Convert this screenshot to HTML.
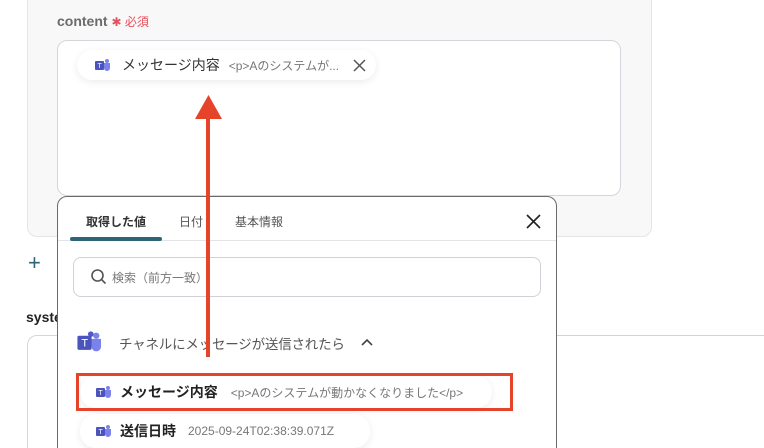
<!DOCTYPE html>
<html><head><meta charset="utf-8"><style>
*{box-sizing:border-box;margin:0;padding:0}
html,body{width:764px;height:448px;overflow:hidden}
body{background:#fff;font-family:"Liberation Sans","Noto Sans CJK JP",sans-serif;position:relative}
.abs{position:absolute}
.panel{left:27px;top:-12px;width:625px;height:249px;background:#f8f8f9;border:1px solid #e3e5e9;border-radius:10px}
.ta{left:57px;top:40px;width:564px;height:156px;background:#fff;border:1px solid #d3d6db;border-radius:10px}
.pill{background:#fff;border-radius:16px;box-shadow:0 2px 8px rgba(0,0,0,.08);display:flex;align-items:center;white-space:nowrap}
.pop{left:57px;top:196px;width:500px;height:270px;background:#fff;border:1px solid #6b6b6b;border-radius:10px}
.t{font-size:13px;color:#333}
.g{color:#777;font-size:12px}
</style></head><body>
<div class="abs panel"></div>
<div class="abs" style="left:57px;top:13px;font-size:14px;font-weight:bold;color:#6b6b6b">content <span style="color:#e8505b;font-weight:normal;font-size:12px">✱ 必須</span></div>
<div class="abs ta"></div>
<div class="abs pill" style="left:77px;top:50px;width:299px;height:30px;padding-left:18px">
<svg width="16" height="14" viewBox="0 0 16 14"><circle cx="12" cy="3" r="2" fill="#7b83eb"/><path d="M8 5h7v5a3 3 0 0 1-6 0z" fill="#7b83eb"/><rect x="0" y="3" width="9" height="9" rx="1" fill="#4b53bc"/><text x="2.5" y="10" font-size="7" fill="#fff" font-family="Liberation Sans">T</text></svg>
<span class="t" style="margin-left:11px;font-size:14px">メッセージ内容</span><span class="g" style="margin-left:9px">&lt;p&gt;Aのシステムが...</span>
<svg style="margin-left:14px" width="13" height="13" viewBox="0 0 13 13"><path d="M1 1l11 11M12 1L1 12" stroke="#555" stroke-width="1.5"/></svg></div>
<div class="abs" style="left:28px;top:250px;font-size:22px;color:#2f6378">+</div>
<div class="abs" style="left:26px;top:309px;font-size:14px;font-weight:bold;color:#222">system</div>
<div class="abs" style="left:27px;top:335px;width:60px;height:130px;border:1px solid #d3d6db;border-radius:10px"></div>
<div class="abs" style="left:556px;top:335px;width:208px;height:1px;background:#d0d3d8"></div>
<div class="abs pop">
<div class="abs" style="left:28px;top:16px;font-size:12px;font-weight:bold;color:#333">取得した値</div>
<div class="abs" style="left:121px;top:16px;font-size:12px;color:#555">日付</div>
<div class="abs" style="left:177px;top:16px;font-size:12px;color:#555">基本情報</div>
<svg class="abs" style="left:468px;top:17px" width="15" height="15" viewBox="0 0 15 15"><path d="M1 1l13 13M14 1L1 14" stroke="#222" stroke-width="1.6"/></svg>
<div class="abs" style="left:0;top:43px;width:498px;height:1px;background:#e2e4e8"></div>
<div class="abs" style="left:12px;top:40px;width:92px;height:4px;background:#2f6378;border-radius:2px"></div>
<div class="abs" style="left:15px;top:60px;width:468px;height:40px;border:1px solid #cfd2d7;border-radius:8px"></div>
<svg class="abs" style="left:32px;top:71px" width="18" height="18" viewBox="0 0 18 18"><circle cx="7.5" cy="7.5" r="5.5" fill="none" stroke="#555" stroke-width="1.6"/><path d="M11.5 11.5l4 4" stroke="#555" stroke-width="1.6"/></svg>
<div class="abs" style="left:54px;top:72px;font-size:12px;color:#777">検索（前方一致）</div>
<svg class="abs" style="left:19px;top:134px" width="26" height="22" viewBox="0 0 16 14"><circle cx="12" cy="3" r="2" fill="#7b83eb"/><circle cx="8.5" cy="2" r="1.8" fill="#5059c9"/><path d="M8 5h7v5a3 3 0 0 1-6 0z" fill="#7b83eb"/><rect x="0" y="3" width="9" height="9" rx="1" fill="#4b53bc"/><text x="2.5" y="10" font-size="7" fill="#fff" font-family="Liberation Sans">T</text></svg>
<div class="abs" style="left:61px;top:136px;font-size:13.5px;color:#555;letter-spacing:-0.2px">チャネルにメッセージが送信されたら</div>
<svg class="abs" style="left:303px;top:141px" width="12" height="8" viewBox="0 0 12 8"><path d="M1 7l5-5 5 5" fill="none" stroke="#444" stroke-width="1.6"/></svg>
</div>
<div class="abs pill" style="left:80px;top:376px;width:412px;height:32px;padding-left:16px">
<svg width="16" height="14" viewBox="0 0 16 14"><circle cx="12" cy="3" r="2" fill="#7b83eb"/><path d="M8 5h7v5a3 3 0 0 1-6 0z" fill="#7b83eb"/><rect x="0" y="3" width="9" height="9" rx="1" fill="#4b53bc"/><text x="2.5" y="10" font-size="7" fill="#fff" font-family="Liberation Sans">T</text></svg>
<span style="margin-left:8px;font-size:14px;font-weight:bold;color:#222">メッセージ内容</span><span class="g" style="margin-left:13px">&lt;p&gt;Aのシステムが動かなくなりました&lt;/p&gt;</span></div>
<div class="abs pill" style="left:80px;top:414px;width:290px;height:34px;padding-left:16px">
<svg width="16" height="14" viewBox="0 0 16 14"><circle cx="12" cy="3" r="2" fill="#7b83eb"/><path d="M8 5h7v5a3 3 0 0 1-6 0z" fill="#7b83eb"/><rect x="0" y="3" width="9" height="9" rx="1" fill="#4b53bc"/><text x="2.5" y="10" font-size="7" fill="#fff" font-family="Liberation Sans">T</text></svg>
<span style="margin-left:8px;font-size:14px;font-weight:bold;color:#222">送信日時</span><span class="g" style="margin-left:12px">2025-09-24T02:38:39.071Z</span></div>
<div class="abs" style="left:76px;top:373px;width:437px;height:38px;border:3px solid #e5432a"></div>
<div class="abs" style="left:206px;top:116px;width:4px;height:241px;background:#e5432a"></div>
<svg class="abs" style="left:195px;top:95px" width="27" height="24"><path d="M13.5 0L27 24H0z" fill="#e5432a"/></svg>
</body></html>
